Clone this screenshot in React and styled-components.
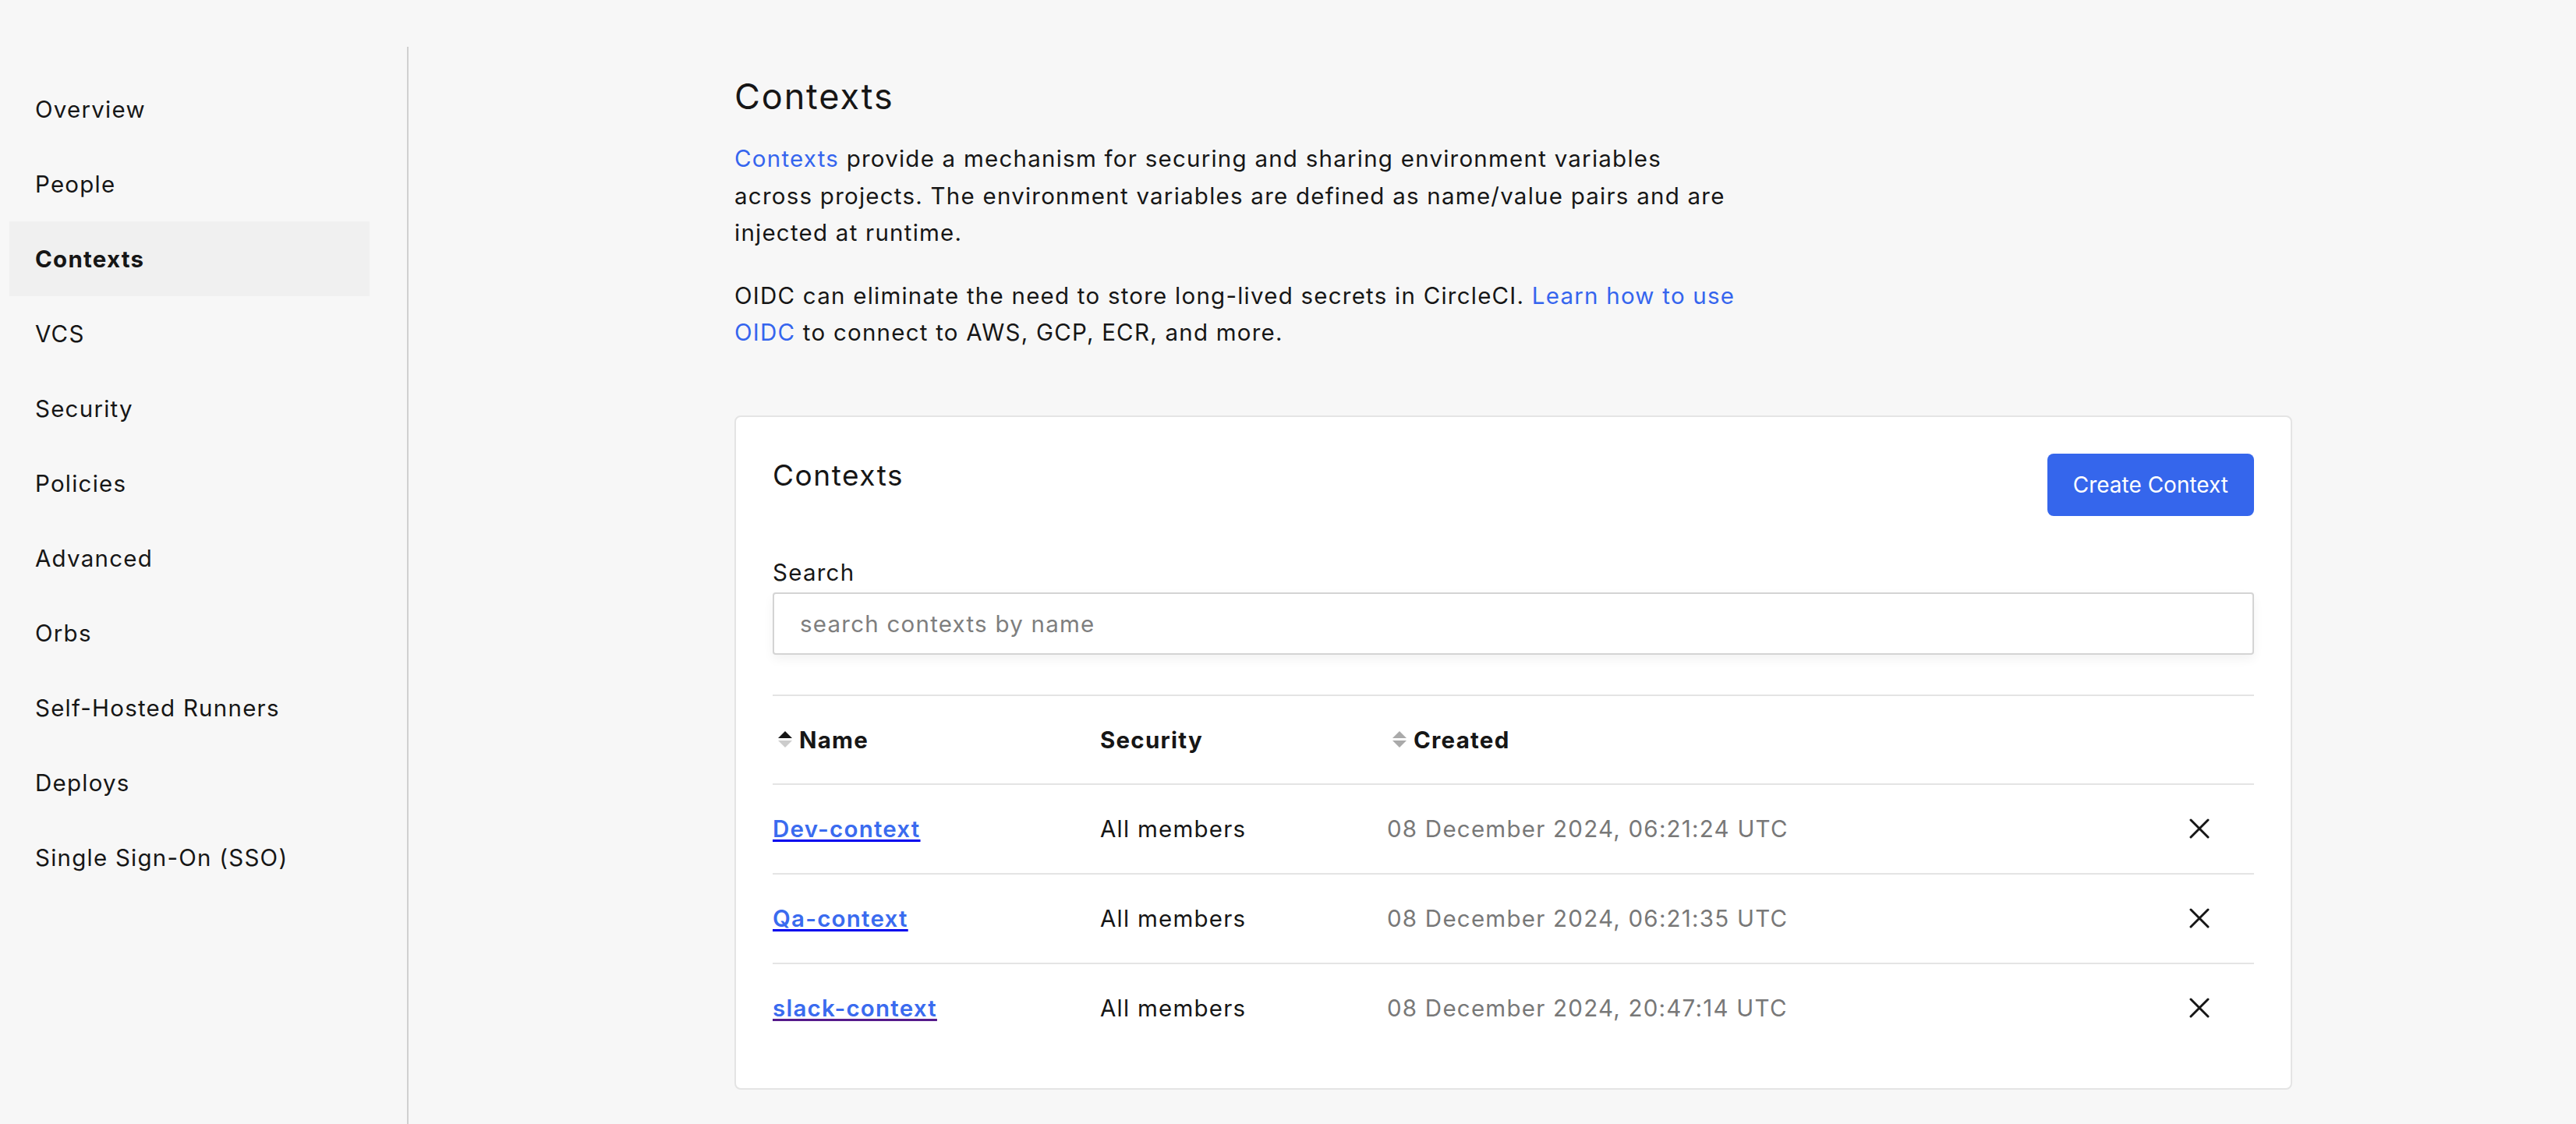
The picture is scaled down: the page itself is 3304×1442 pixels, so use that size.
import styled, { createGlobalStyle } from "styled-components";

const GlobalStyle = createGlobalStyle`
  * {
    box-sizing: border-box;
    letter-spacing: 0.042em;
  }
  body {
    margin: 0;
    background: #f7f7f7;
    font-family: Inter, "Noto Sans", sans-serif;
    color: #161616;
  }
`;

const navItems = [
  "Overview",
  "People",
  "Contexts",
  "VCS",
  "Security",
  "Policies",
  "Advanced",
  "Orbs",
  "Self-Hosted Runners",
  "Deploys",
  "Single Sign-On (SSO)",
];

const contexts = [
  { name: "Dev-context", security: "All members", created: "08 December 2024, 06:21:24 UTC", visited: false },
  { name: "Qa-context", security: "All members", created: "08 December 2024, 06:21:35 UTC", visited: false },
  { name: "slack-context", security: "All members", created: "08 December 2024, 20:47:14 UTC", visited: true },
];

function SortIcon({ up, down }) {
  return (
    <StyledSort width="18" height="22" viewBox="0 0 18 22">
      <polygon points="9,0 18,9 0,9" fill={up} />
      <polygon points="0,12 18,12 9,21" fill={down} />
    </StyledSort>
  );
}

function CloseIcon() {
  return (
    <svg width="26" height="26" viewBox="0 0 26 26">
      <path d="M2 2 L24 24 M24 2 L2 24" stroke="#161616" strokeWidth="3" strokeLinecap="round" />
    </svg>
  );
}

function App() {
  return (
    <StyledPage>
      <GlobalStyle />
      <StyledSidebar>
        {navItems.map((item) => (
          <StyledNavItem key={item} $active={item === "Contexts"}>
            {item}
          </StyledNavItem>
        ))}
      </StyledSidebar>

      <StyledMain>
        <StyledContent>
          <StyledHeading>Contexts</StyledHeading>
          <StyledText>
            <StyledInlineLink>Contexts</StyledInlineLink> provide a mechanism for securing and sharing
            environment variables across projects. The environment variables are defined as
            name/value pairs and are injected at runtime.
          </StyledText>
          <StyledText $gap>
            OIDC can eliminate the need to store long-lived secrets in CircleCI.{" "}
            <StyledInlineLink>Learn how to use OIDC</StyledInlineLink> to connect to AWS, GCP, ECR,
            and more.
          </StyledText>

          <StyledCard>
            <StyledCardHeader>
              <StyledCardTitle>Contexts</StyledCardTitle>
              <StyledButton>Create Context</StyledButton>
            </StyledCardHeader>

            <StyledLabel>Search</StyledLabel>
            <StyledInput placeholder="search contexts by name" />

            <StyledTable>
              <StyledHeadRow>
                <StyledHeadCell>
                  <SortIcon up="#161616" down="#cccccc" />
                  Name
                </StyledHeadCell>
                <StyledHeadCell>Security</StyledHeadCell>
                <StyledHeadCell>
                  <SortIcon up="#aaaaaa" down="#aaaaaa" />
                  Created
                </StyledHeadCell>
                <div />
              </StyledHeadRow>

              {contexts.map((c) => (
                <StyledRow key={c.name}>
                  <div>
                    <StyledNameLink href="#" $visited={c.visited}>
                      {c.name}
                    </StyledNameLink>
                  </div>
                  <StyledCell>{c.security}</StyledCell>
                  <StyledCell $muted>{c.created}</StyledCell>
                  <StyledAction>
                    <CloseIcon />
                  </StyledAction>
                </StyledRow>
              ))}
            </StyledTable>
          </StyledCard>
        </StyledContent>
      </StyledMain>
    </StyledPage>
  );
}

export default App;

const StyledPage = styled.div`
display: flex;
min-height: 100vh;
`

const StyledSidebar = styled.nav`
width: 524px;
flex-shrink: 0;
margin-top: 60px;
padding: 32px 48px 0 12px;
border-right: 2px solid #d0d0d0;
`

const StyledNavItem = styled.div`
display: flex;
align-items: center;
height: 96px;
padding-left: 33px;
font-size: 29.5px;
color: #161616;
font-weight: ${(p) => (p.$active ? 700 : 400)};
background: ${(p) => (p.$active ? "#f0f0f0" : "transparent")};
`

const StyledMain = styled.main`
flex: 1;
padding: 97px 0 0 418px;
`

const StyledContent = styled.div`
width: 1998px;
`

const StyledHeading = styled.h1`
margin: 0;
font-size: 45px;
line-height: 54px;
font-weight: 400;
color: #161616;
`

const StyledText = styled.p`
margin: ${(p) => (p.$gap ? "33px" : "29px")} 0 0;
max-width: 1295px;
font-size: 29.5px;
line-height: 47.5px;
color: #161616;
`

const StyledInlineLink = styled.span`
color: #3565ee;
`

const StyledCard = styled.section`
margin-top: 82px;
background: #ffffff;
border: 2px solid #e4e4e4;
border-radius: 8px;
padding: 47px 47px 46px;
`

const StyledCardHeader = styled.div`
display: flex;
justify-content: space-between;
align-items: flex-start;
`

const StyledCardTitle = styled.h2`
margin: 5px 0 0;
font-size: 37px;
line-height: 45px;
font-weight: 400;
color: #161616;
`

const StyledButton = styled.button`
height: 80px;
padding: 0 33px;
border: none;
border-radius: 8px;
background: #3566ec;
color: #ffffff;
font-family: Inter, sans-serif;
font-size: 28px;
letter-spacing: 0;
`

const StyledLabel = styled.div`
margin-top: 54px;
font-size: 29.5px;
line-height: 36px;
color: #161616;
`

const StyledInput = styled.input`
display: block;
width: 100%;
height: 80px;
margin-top: 8px;
padding: 0 33px;
border: 2px solid #d4d4d4;
border-radius: 4px;
box-shadow: 0 6px 14px rgba(0, 0, 0, 0.05);
font-family: Inter, sans-serif;
font-size: 29.5px;
color: #161616;
outline: none;
&::placeholder {
  color: #7e7e7e;
}
`

const StyledTable = styled.div`
margin-top: 51px;
border-top: 2px solid #e4e4e4;
`

const StyledHeadRow = styled.div`
display: grid;
grid-template-columns: 420px 368px 1fr 140px;
align-items: center;
height: 114px;
border-bottom: 2px solid #e4e4e4;
`

const StyledHeadCell = styled.div`
display: flex;
align-items: center;
gap: 9px;
font-size: 29.5px;
font-weight: 700;
color: #161616;
`

const StyledSort = styled.svg`
margin-left: 7px;
flex-shrink: 0;
`

const StyledRow = styled.div`
display: grid;
grid-template-columns: 420px 368px 1fr 140px;
align-items: center;
height: 115px;
border-bottom: 2px solid #e4e4e4;
&:last-child {
  height: 113px;
  border-bottom: none;
}
`

const StyledNameLink = styled.a`
font-size: 29.5px;
font-weight: 600;
color: #3a6bef;
text-decoration: underline;
text-decoration-color: ${(p) => (p.$visited ? "#551a8b" : "#0000ee")};
text-decoration-thickness: 3px;
text-underline-offset: 3px;
`

const StyledCell = styled.div`
font-size: 29.5px;
color: ${(p) => (p.$muted ? "#787878" : "#161616")};
`

const StyledAction = styled.div`
display: flex;
justify-content: center;
align-items: center;
`
